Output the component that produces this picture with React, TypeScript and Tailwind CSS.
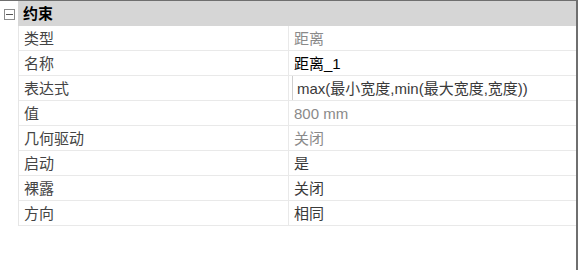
import React from 'react';

type Row = { label: string; value: string; tone: 'muted' | 'dark' | 'black'; edit?: boolean };

const rows: Row[] = [
  { label: '类型', value: '距离', tone: 'muted' },
  { label: '名称', value: '距离_1', tone: 'black' },
  { label: '表达式', value: 'max(最小宽度,min(最大宽度,宽度))', tone: 'dark', edit: true },
  { label: '值', value: '800 mm', tone: 'muted' },
  { label: '几何驱动', value: '关闭', tone: 'muted' },
  { label: '启动', value: '是', tone: 'dark' },
  { label: '裸露', value: '关闭', tone: 'dark' },
  { label: '方向', value: '相同', tone: 'dark' },
];

const toneClass = {
  muted: 'text-[#8a8a8a]',
  dark: 'text-[#3a3a3a]',
  black: 'text-black',
};

const App: React.FC = () => {
  return (
    <div className="w-[580px] h-[270px] bg-white font-['Liberation_Sans','Noto_Sans_CJK_SC',sans-serif] text-[15px] leading-none">
      <div className="w-[578px] h-[270px] border-t border-r-2 border-[#6f6f6f] flex flex-col">
        <div className="flex h-[25px]">
          <div className="w-[18px] flex items-start pt-[8px] pl-[4px]">
            <div className="w-[11px] h-[11px] border border-[#8c8c8c] flex items-center justify-center bg-white">
              <div className="w-[7px] h-px bg-[#555]" />
            </div>
          </div>
          <div className="flex-1 bg-[#d6d6d6] flex items-center pl-[5px] font-bold text-black">约束</div>
        </div>
        <div className="ml-[18px] border-l border-[#e6e6e6]">
          {rows.map((r) => (
            <div key={r.label} className="flex h-[25px] border-b border-[#e9e9e9]">
              <div className="w-[270px] flex items-center pl-[5px] text-[#444] border-r border-[#e9e9e9]">{r.label}</div>
              <div className="flex-1 flex items-center pl-[3px]">
                {r.edit ? (
                  <div className={`h-full flex items-center pl-[4px] border-l border-[#cfcfcf] ${toneClass[r.tone]}`}>{r.value}</div>
                ) : (
                  <span className={`pl-[2px] ${toneClass[r.tone]}`}>{r.value}</span>
                )}
              </div>
            </div>
          ))}
        </div>
      </div>
    </div>
  );
};

export default App;
